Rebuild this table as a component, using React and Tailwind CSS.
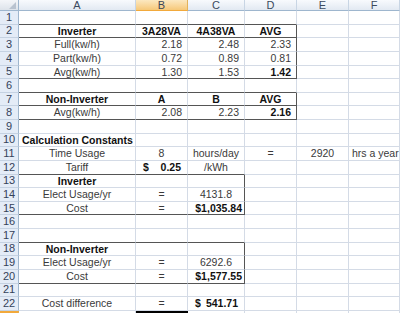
import React from 'react';

const cols = ['A', 'B', 'C', 'D', 'E', 'F'];

// each row: 6 cells (A..F); null = empty
// a: 'c' center, 'r' right, 'l' left, 'acct' accounting ($ left, value right)
const rows = [
  [null, null, null, null, null, null],
  [{ t: 'Inverter', a: 'c', b: 1 }, { t: '3A28VA', a: 'c', b: 1 }, { t: '4A38VA', a: 'c', b: 1 }, { t: 'AVG', a: 'c', b: 1 }, null, null],
  [{ t: 'Full(kw/h)', a: 'c' }, { t: '2.18', a: 'r' }, { t: '2.48', a: 'r' }, { t: '2.33', a: 'r' }, null, null],
  [{ t: 'Part(kw/h)', a: 'c' }, { t: '0.72', a: 'r' }, { t: '0.89', a: 'r' }, { t: '0.81', a: 'r' }, null, null],
  [{ t: 'Avg(kw/h)', a: 'c' }, { t: '1.30', a: 'r' }, { t: '1.53', a: 'r' }, { t: '1.42', a: 'r', b: 1 }, null, null],
  [null, null, null, null, null, null],
  [{ t: 'Non-Inverter', a: 'c', b: 1 }, { t: 'A', a: 'c', b: 1 }, { t: 'B', a: 'c', b: 1 }, { t: 'AVG', a: 'c', b: 1 }, null, null],
  [{ t: 'Avg(kw/h)', a: 'c' }, { t: '2.08', a: 'r' }, { t: '2.23', a: 'r' }, { t: '2.16', a: 'r', b: 1 }, null, null],
  [null, null, null, null, null, null],
  [{ t: 'Calculation Constants', a: 'l', b: 1 }, null, null, null, null, null],
  [{ t: 'Time Usage', a: 'c' }, { t: '8', a: 'c' }, { t: 'hours/day', a: 'c' }, { t: '=', a: 'c' }, { t: '2920', a: 'c' }, { t: 'hrs a year', a: 'l' }],
  [{ t: 'Tariff', a: 'c' }, { t: '0.25', a: 'acct', b: 1 }, { t: '/kWh', a: 'c' }, null, null, null],
  [{ t: 'Inverter', a: 'c', b: 1 }, null, null, null, null, null],
  [{ t: 'Elect Usage/yr', a: 'c' }, { t: '=', a: 'c' }, { t: '4131.8', a: 'c' }, null, null, null],
  [{ t: 'Cost', a: 'c' }, { t: '=', a: 'c' }, { t: '$1,035.84', a: 'r2', b: 1 }, null, null, null],
  [null, null, null, null, null, null],
  [null, null, null, null, null, null],
  [{ t: 'Non-Inverter', a: 'c', b: 1 }, null, null, null, null, null],
  [{ t: 'Elect Usage/yr', a: 'c' }, { t: '=', a: 'c' }, { t: '6292.6', a: 'c' }, null, null, null],
  [{ t: 'Cost', a: 'c' }, { t: '=', a: 'c' }, { t: '$1,577.55', a: 'r2', b: 1 }, null, null, null],
  [null, null, null, null, null, null],
  [{ t: 'Cost difference', a: 'c' }, { t: '=', a: 'c' }, { t: '541.71', a: 'acct', b: 1 }, null, null, null],
  [null, null, null, null, null, null],
];

function darkBottom(r, c) {
  if ([1, 2, 5, 6, 7, 8].includes(r) && c <= 3) return true;
  if ([12, 15, 17, 20].includes(r) && c <= 2) return true;
  return false;
}

function darkRight(r, c) {
  if (c === 3 && ((r >= 2 && r <= 5) || (r >= 7 && r <= 8))) return true;
  if (c === 2 && ((r >= 13 && r <= 15) || (r >= 18 && r <= 20))) return true;
  return false;
}

function CellText({ cell }) {
  if (!cell) return null;
  const weight = cell.b ? 'font-bold text-[#111]' : 'text-[#3a3a3a]';
  if (cell.a === 'acct') {
    return (
      <div className={`flex w-full justify-between pl-[7px] pr-[6px] ${weight}`}>
        <span>$</span>
        <span>{cell.t}</span>
      </div>
    );
  }
  const align =
    cell.a === 'c' ? 'justify-center' :
    cell.a === 'r' ? 'justify-end pr-[5px]' :
    cell.a === 'r2' ? 'justify-end pr-[2px]' :
    'justify-start pl-[3px]';
  return (
    <div className={`flex w-full whitespace-nowrap ${align} ${weight}`}>{cell.t}</div>
  );
}

export default function App() {
  return (
    <div
      className="w-[400px] h-[313px] overflow-hidden bg-white text-[10.5px] leading-none"
      style={{ fontFamily: '"Liberation Sans", Arial, sans-serif' }}
    >
      <div className="grid grid-cols-[19px_117px_52px_57px_52px_52px_51px] grid-rows-[11px_repeat(23,13.64px)]">
        {/* corner */}
        <div className="relative border-r border-b border-[#9eb6ce] bg-linear-to-b from-[#f4f6f9] to-[#dde3ea]">
          <svg className="absolute right-[2px] bottom-[1px]" width="7" height="7" viewBox="0 0 7 7">
            <polygon points="7,0 7,7 0,7" fill="#b9c3d0" />
          </svg>
        </div>
        {/* column headers */}
        {cols.map((c) =>
          c === 'B' ? (
            <div key={c} className="flex items-center justify-center border-r border-b border-r-[#e3b25a] border-b-[#f2a93b] bg-linear-to-b from-[#fce8c0] to-[#f6c878] text-[11px] text-[#3b4556]">
              {c}
            </div>
          ) : (
            <div key={c} className="flex items-center justify-center border-r border-b border-r-[#c8d5e4] border-b-[#9eb6ce] bg-linear-to-b from-[#f8fafd] to-[#e2e9f2] text-[11px] text-[#3b4a5e]">
              {c}
            </div>
          )
        )}
        {rows.map((row, ri) => {
          const r = ri + 1;
          const active = r === 23;
          return (
            <React.Fragment key={r}>
              <div
                className={
                  active
                    ? 'border-r border-t-2 border-r-[#e3b25a] border-t-[#f2a93b] bg-[#f8d08a]'
                    : 'flex items-center justify-center border-r border-b border-r-[#9eb6ce] border-b-[#c5d2e2] bg-[#e4ecf7] text-[11px] text-[#34425a]'
                }
              >
                {active ? null : r}
              </div>
              {row.map((cell, ci) => {
                const bb = darkBottom(r, ci) ? 'border-b-[#555]' : 'border-b-[#d4dbe6]';
                const br = darkRight(r, ci) ? 'border-r-[#555]' : 'border-r-[#d4dbe6]';
                const sel = active && ci === 1 ? 'border-2 border-black' : `border-r border-b ${bb} ${br}`;
                return (
                  <div key={ci} className={`flex items-center ${sel}`}>
                    <CellText cell={cell} />
                  </div>
                );
              })}
            </React.Fragment>
          );
        })}
      </div>
    </div>
  );
}
